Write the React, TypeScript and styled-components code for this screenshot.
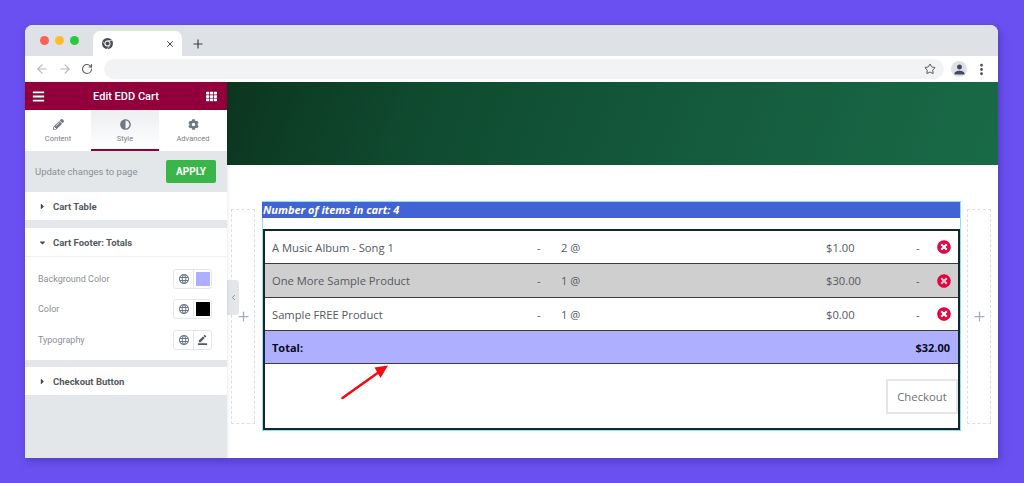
import React from "react";
import styled, { createGlobalStyle } from "styled-components";
import { ArrowLeft, ArrowRight, ChevronLeft, Plus, RotateCw, Star, X } from "lucide-react";
import {
  FaAdjust,
  FaBars,
  FaCaretDown,
  FaCaretRight,
  FaCog,
  FaPencilAlt,
  FaTh,
  FaTimesCircle,
} from "react-icons/fa";
import { MdBorderColor, MdLanguage, MdMoreVert, MdPerson } from "react-icons/md";

const GlobalStyle = createGlobalStyle`
  html, body {
    margin: 0;
    padding: 0;
    background: #6a50f0;
    overflow: hidden;
  }
  * {
    box-sizing: border-box;
  }
`;

const items = [
  { name: "A Music Album - Song 1", qty: "2 @", price: "$1.00", alt: false },
  { name: "One More Sample Product", qty: "1 @", price: "$30.00", alt: true },
  { name: "Sample FREE Product", qty: "1 @", price: "$0.00", alt: false },
];

const ChromeLogo = () => (
  <svg width="11" height="11" viewBox="0 0 24 24">
    <circle cx="12" cy="12" r="12" fill="#4a4d52" />
    <circle cx="12" cy="12" r="6.4" fill="#fff" />
    <circle cx="12" cy="12" r="4.4" fill="#4a4d52" />
    <path d="M12 5.6h10.4M8 17l-5.5-9M16.6 16.4 11.4 24" stroke="#fff" strokeWidth="1.4" />
  </svg>
);

const Arrow = () => (
  <ArrowSvg width="50" height="36" viewBox="0 0 50 36">
    <path d="M2.5 33 39 7" stroke="#f50a14" strokeWidth="2.6" strokeLinecap="round" fill="none" />
    <path d="M48 .5 34.5 2.5 40.5 13Z" fill="#f50a14" />
  </ArrowSvg>
);

export default function App() {
  return (
    <>
      <GlobalStyle />
      <Page>
        <Browser>
          <TabStrip>
            <Lights>
              <Light color="#ff5f57" />
              <Light color="#ffbd2e" />
              <Light color="#28c940" />
            </Lights>
            <Tab>
              <ChromeLogo />
              <X size={10} color="#444" strokeWidth={2.4} />
            </Tab>
            <NewTab>
              <Plus size={14} strokeWidth={2} />
            </NewTab>
          </TabStrip>

          <Toolbar>
            <NavIcon $muted>
              <ArrowLeft size={14} />
            </NavIcon>
            <NavIcon $muted>
              <ArrowRight size={14} />
            </NavIcon>
            <NavIcon>
              <RotateCw size={12} strokeWidth={2.2} />
            </NavIcon>
            <Omnibox>
              <Star size={12} color="#50545a" strokeWidth={2} />
            </Omnibox>
            <Avatar>
              <MdPerson size={15} />
            </Avatar>
            <MdMoreVert size={17} color="#50545a" />
          </Toolbar>

          <Body>
            <Sidebar>
              <SideHeader>
                <FaBars size={13} />
                <SideTitle>Edit EDD Cart</SideTitle>
                <FaTh size={11} />
              </SideHeader>

              <ModeTabs>
                <ModeTab>
                  <FaPencilAlt size={11} />
                  <span>Content</span>
                </ModeTab>
                <ModeTab $active>
                  <FaAdjust size={11} />
                  <span>Style</span>
                </ModeTab>
                <ModeTab>
                  <FaCog size={11} />
                  <span>Advanced</span>
                </ModeTab>
              </ModeTabs>

              <ApplyBar>
                <span>Update changes to page</span>
                <ApplyButton>APPLY</ApplyButton>
              </ApplyBar>

              <Section>
                <SectionHead>
                  <FaCaretRight size={9} />
                  Cart Table
                </SectionHead>
              </Section>

              <Section>
                <SectionHead $open>
                  <FaCaretDown size={9} />
                  Cart Footer: Totals
                </SectionHead>
                <Controls>
                  <ControlRow>
                    <span>Background Color</span>
                    <ControlGroup>
                      <ControlCell>
                        <MdLanguage size={12} />
                      </ControlCell>
                      <ControlCell>
                        <Swatch color="#aeb0ff" />
                      </ControlCell>
                    </ControlGroup>
                  </ControlRow>
                  <ControlRow>
                    <span>Color</span>
                    <ControlGroup>
                      <ControlCell>
                        <MdLanguage size={12} />
                      </ControlCell>
                      <ControlCell>
                        <Swatch color="#000" />
                      </ControlCell>
                    </ControlGroup>
                  </ControlRow>
                  <ControlRow>
                    <span>Typography</span>
                    <ControlGroup>
                      <ControlCell>
                        <MdLanguage size={12} />
                      </ControlCell>
                      <ControlCell>
                        <MdBorderColor size={11} color="#55595e" />
                      </ControlCell>
                    </ControlGroup>
                  </ControlRow>
                </Controls>
              </Section>

              <Section>
                <SectionHead>
                  <FaCaretRight size={9} />
                  Checkout Button
                </SectionHead>
              </Section>
            </Sidebar>

            <Main>
              <CollapseHandle>
                <ChevronLeft size={9} strokeWidth={2} />
              </CollapseHandle>
              <Hero />
              <Canvas>
                <DropZone>
                  <Plus size={15} strokeWidth={2} />
                </DropZone>
                <Widget>
                  <CartCount>Number of items in cart: 4</CartCount>
                  <CartBox>
                    {items.map((item) => (
                      <CartRow key={item.name} $alt={item.alt}>
                        <span>{item.name}</span>
                        <span>-</span>
                        <span>{item.qty}</span>
                        <span>{item.price}</span>
                        <span>-</span>
                        <RemoveIcon>
                          <FaTimesCircle size={14} />
                        </RemoveIcon>
                      </CartRow>
                    ))}
                    <TotalRow>
                      <span>Total:</span>
                      <span>$32.00</span>
                    </TotalRow>
                    <CheckoutRow>
                      <CheckoutButton>Checkout</CheckoutButton>
                    </CheckoutRow>
                  </CartBox>
                </Widget>
                <DropZone>
                  <Plus size={15} strokeWidth={2} />
                </DropZone>
              </Canvas>
              <Arrow />
            </Main>
          </Body>
        </Browser>
      </Page>
    </>
  );
}

const Page = styled.div`
  width: 1024px;
  height: 483px;
  padding: 25px 26px 25px 25px;
  background: #6a50f0;
`;

const Browser = styled.div`
  width: 973px;
  height: 433px;
  display: flex;
  flex-direction: column;
  background: #fff;
  border-radius: 8px 8px 0 0;
  overflow: hidden;
  box-shadow: 2px 3px 8px rgba(40, 20, 120, 0.35);
`;

const TabStrip = styled.div`
  height: 31px;
  flex: none;
  display: flex;
  align-items: flex-end;
  background: #dee1e6;
`;

const Lights = styled.div`
  display: flex;
  gap: 6px;
  align-self: flex-start;
  padding: 11px 0 0 15px;
  width: 68px;
`;

const Light = styled.span<{ color: string }>`
  width: 9px;
  height: 9px;
  border-radius: 50%;
  background: ${(p) => p.color};
`;

const Tab = styled.div`
  width: 89px;
  height: 25px;
  display: flex;
  align-items: center;
  justify-content: space-between;
  padding: 0 7px 0 9px;
  background: #fff;
  border-radius: 7px 7px 0 0;
`;

const NewTab = styled.div`
  height: 25px;
  display: flex;
  align-items: center;
  padding-left: 9px;
  color: #3c3f43;
`;

const Toolbar = styled.div`
  height: 26px;
  flex: none;
  display: flex;
  align-items: center;
  padding: 0 7px 0 10px;
  background: #fff;
`;

const NavIcon = styled.div<{ $muted?: boolean }>`
  width: 23px;
  display: flex;
  color: ${(p) => (p.$muted ? "#b5b8bc" : "#5a5d61")};
`;

const Omnibox = styled.div`
  width: 840px;
  height: 20px;
  padding-right: 8px;
  display: flex;
  align-items: center;
  justify-content: flex-end;
  background: #f1f3f4;
  border-radius: 10px;
`;

const Avatar = styled.div`
  width: 16px;
  height: 16px;
  margin: 0 6px 0 7px;
  display: flex;
  align-items: center;
  justify-content: center;
  border-radius: 50%;
  background: #dfe1e5;
  color: #3f4a5c;
`;

const Body = styled.div`
  flex: 1;
  display: flex;
  min-height: 0;
`;

const Sidebar = styled.aside`
  width: 202px;
  flex: none;
  background: #e4e7ea;
  font-family: Roboto, "Liberation Sans", sans-serif;
  box-shadow: 1px 0 3px rgba(0, 0, 0, 0.08);
  z-index: 1;
`;

const SideHeader = styled.div`
  height: 28px;
  display: flex;
  align-items: center;
  justify-content: space-between;
  padding: 0 10px 0 7px;
  background: #92003b;
  color: #fff;
`;

const SideTitle = styled.div`
  font-size: 11px;
  font-weight: 500;
  margin-left: 1px;
`;

const ModeTabs = styled.div`
  height: 41px;
  display: grid;
  grid-template-columns: 66px 68px 68px;
  background: #fff;
`;

const ModeTab = styled.div<{ $active?: boolean }>`
  display: flex;
  flex-direction: column;
  align-items: center;
  justify-content: center;
  gap: 4px;
  padding-top: 2px;
  font-size: 7.5px;
  color: #7d8186;
  background: ${(p) => (p.$active ? "linear-gradient(#eceef0, #fff)" : "#fff")};
  border-bottom: 2px solid ${(p) => (p.$active ? "#92003b" : "#fff")};

  svg {
    color: #6d7882;
  }
`;

const ApplyBar = styled.div`
  height: 41px;
  display: flex;
  align-items: center;
  justify-content: space-between;
  padding: 0 11px 0 10px;
  font-size: 9.5px;
  color: #8b8f94;
`;

const ApplyButton = styled.div`
  width: 50px;
  height: 23px;
  display: flex;
  align-items: center;
  justify-content: center;
  background: #39b54a;
  border-radius: 2px;
  color: #fff;
  font-size: 10px;
  font-weight: 700;
`;

const Section = styled.section`
  background: #fff;
  margin-bottom: 7px;

  &:first-of-type {
    margin-bottom: 8px;
  }
`;

const SectionHead = styled.div<{ $open?: boolean }>`
  height: ${(p) => (p.$open ? "29px" : "28px")};
  display: flex;
  align-items: center;
  gap: 6px;
  padding-left: 13px;
  font-size: 9.5px;
  font-weight: 700;
  color: #55595e;
  border-bottom: ${(p) => (p.$open ? "1px solid #eef0f2" : "none")};

  svg {
    flex: none;
    color: #45494e;
  }
`;

const Controls = styled.div`
  padding: 10px 15px 9px 13px;
  display: flex;
  flex-direction: column;
  gap: 7.5px;
`;

const ControlRow = styled.div`
  height: 23px;
  display: flex;
  align-items: center;
  justify-content: space-between;
  font-size: 9px;
  color: #8b8f94;
`;

const ControlGroup = styled.div`
  width: 39px;
  height: 20px;
  display: grid;
  grid-template-columns: 19px 18px;
  border: 1px solid #e4e7ea;
  border-radius: 3px;
`;

const ControlCell = styled.div`
  display: flex;
  align-items: center;
  justify-content: center;
  color: #6d7882;

  & + & {
    border-left: 1px solid #e4e7ea;
  }
`;

const Swatch = styled.span<{ color: string }>`
  width: 14px;
  height: 14px;
  background: ${(p) => p.color};
`;

const Main = styled.main`
  position: relative;
  flex: 1;
  min-width: 0;
  background: #fff;
`;

const CollapseHandle = styled.div`
  position: absolute;
  left: 0;
  top: 198px;
  width: 12px;
  height: 35px;
  display: flex;
  align-items: center;
  justify-content: center;
  background: #e4e7ea;
  color: #6d7882;
  border-radius: 0 3px 3px 0;
`;

const Hero = styled.div`
  height: 83px;
  background: linear-gradient(110deg, #0c351f 0%, #0f4a2f 25%, #145a3c 60%, #196a47 100%);
`;

const Canvas = styled.div`
  display: flex;
  align-items: flex-start;
  padding: 36px 7px 0 4px;
`;

const DropZone = styled.div`
  width: 24px;
  height: 215px;
  margin-top: 8px;
  flex: none;
  display: flex;
  align-items: center;
  justify-content: center;
  border: 1px dashed #dcdfe2;
  color: #a4afb7;
`;

const Widget = styled.div`
  width: 699px;
  margin: 0 6px 0 7px;
  flex: none;
  border: 1px solid #8ee0f8;
  font-family: "Open Sans", "Liberation Sans", sans-serif;
`;

const CartCount = styled.div`
  height: 16px;
  margin: 0 0 11px -1px;
  padding: 0 0 1px 1px;
  display: flex;
  align-items: center;
  background: #4263d6;
  color: #fff;
  font-size: 11px;
  font-weight: 700;
  font-style: italic;
`;

const CartBox = styled.div`
  height: 201px;
  display: flex;
  flex-direction: column;
  border: 2px solid #14282b;
`;

const CartRow = styled.div<{ $alt: boolean }>`
  height: 33px;
  flex: none;
  display: grid;
  grid-template-columns: 265px 24px 265px 90px 21px 1fr;
  align-items: center;
  padding-left: 7px;
  font-size: 11.2px;
  color: #54595f;
  background: ${(p) => (p.$alt ? "#cfcfcf" : "#fff")};
  border-bottom: 1px solid #3c3c3c;

  &:nth-child(2) {
    height: 34px;
  }
`;

const RemoveIcon = styled.span`
  display: flex;
  color: #e9003f;
`;

const TotalRow = styled.div`
  height: 33px;
  flex: none;
  display: flex;
  align-items: center;
  justify-content: space-between;
  padding: 0 8px 0 7px;
  background: #aeb0ff;
  border-bottom: 1px solid #3c3c4c;
  color: #0b0b1a;
  font-size: 11px;
  font-weight: 700;
`;

const CheckoutRow = styled.div`
  display: flex;
  justify-content: flex-end;
  padding-top: 15px;
`;

const CheckoutButton = styled.div`
  width: 72px;
  height: 35px;
  display: flex;
  align-items: center;
  justify-content: center;
  border: 2px solid #e6e6e6;
  border-radius: 1px;
  color: #6d7178;
  font-size: 11.3px;
`;

const ArrowSvg = styled.svg`
  position: absolute;
  left: 113px;
  top: 283px;
`;
